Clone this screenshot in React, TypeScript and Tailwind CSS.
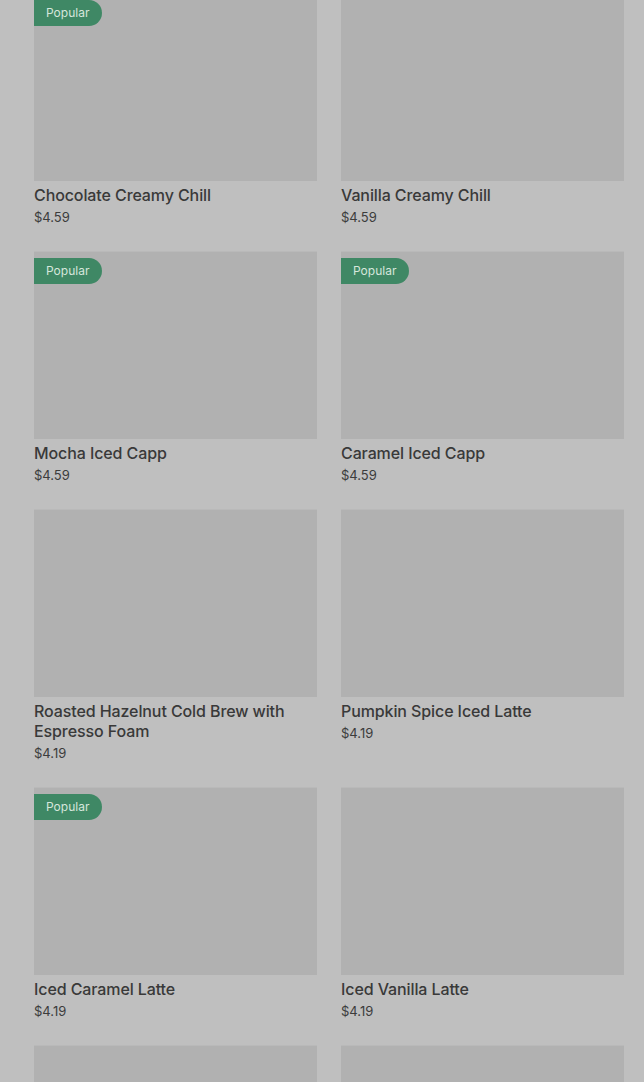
type Item = {
  name: string
  price: string
  popular?: boolean
}

const items: Item[] = [
  { name: 'Chocolate Creamy Chill', price: '$4.59', popular: true },
  { name: 'Vanilla Creamy Chill', price: '$4.59' },
  { name: 'Mocha Iced Capp', price: '$4.59', popular: true },
  { name: 'Caramel Iced Capp', price: '$4.59', popular: true },
  { name: 'Roasted Hazelnut Cold Brew with Espresso Foam', price: '$4.19' },
  { name: 'Pumpkin Spice Iced Latte', price: '$4.19' },
  { name: 'Iced Caramel Latte', price: '$4.19', popular: true },
  { name: 'Iced Vanilla Latte', price: '$4.19' },
]

function ItemImage({ popular }: { popular?: boolean }) {
  return (
    <div className="relative h-[188px] bg-[#b1b1b1] border-t border-[#b9b9b9]">
      {popular && (
        <span className="absolute left-0 top-[6px] flex h-[26px] items-center rounded-r-full bg-[#3f8865] pl-3 pr-[13px] text-[12px] text-[#d6e6dc]">
          Popular
        </span>
      )}
    </div>
  )
}

function MenuCard({ item }: { item: Item }) {
  return (
    <div className="flex flex-col">
      <ItemImage popular={item.popular} />
      <div className="mt-[4px] text-[16px] font-medium leading-5 tracking-[-0.1px] text-[#393939]">{item.name}</div>
      <div className="mt-[3px] text-[13px] leading-[18px] text-[#3c3c3c]">{item.price}</div>
    </div>
  )
}

export default function App() {
  return (
    <div
      className="h-[1082px] w-full overflow-hidden bg-[#bfbfbf]"
      style={{ fontFamily: 'Inter, "Noto Sans", sans-serif' }}
    >
      <div className="-mt-[7px] grid grid-cols-2 gap-x-6 gap-y-[25px] pl-[34px] pr-5">
        {items.map((item) => (
          <MenuCard key={item.name} item={item} />
        ))}
        {/* next row, only the tops show */}
        <ItemImage />
        <ItemImage />
      </div>
    </div>
  )
}
